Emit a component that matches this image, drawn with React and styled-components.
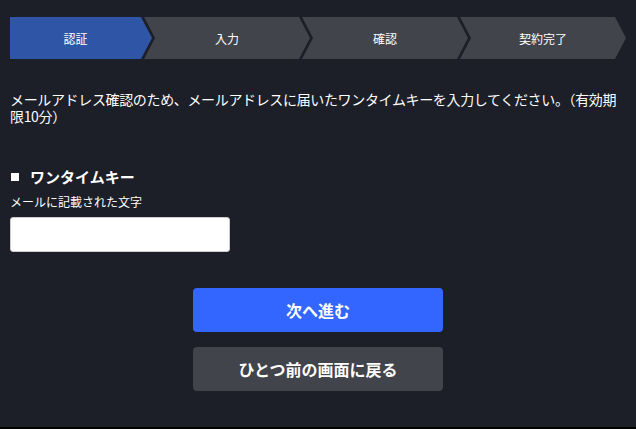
import React from "react";
import styled, { createGlobalStyle } from "styled-components";

const Global = createGlobalStyle`
  html, body {
    margin: 0;
    padding: 0;
    background: #000;
  }
  body {
    font-family: "Noto Sans CJK JP", "Noto Sans", sans-serif;
    color: #fff;
  }
`;

const Page = styled.div`
  height: 427px;
  background: #1c1e28;
  padding: 17px 10px 0;
  box-sizing: border-box;
`;

const Steps = styled.div`
  display: flex;
  height: 42px;
`;

// chevron steps, the first one has no notch on its left
const Step = styled.div`
  box-sizing: border-box;
  flex: ${(p) => (p.first ? "0 0 142px" : "1 1 0")};
  display: flex;
  align-items: center;
  justify-content: center;
  font-size: 12px;
  background: ${(p) => (p.active ? "#2f55a6" : "#41444b")};
  margin-left: ${(p) => (p.first ? "0" : "-8px")};
  padding: ${(p) => (p.first ? "0 11px 0 0" : "0")};
  clip-path: ${(p) =>
    p.first
      ? "polygon(0 0, calc(100% - 11px) 0, 100% 50%, calc(100% - 11px) 100%, 0 100%)"
      : "polygon(0 0, calc(100% - 11px) 0, 100% 50%, calc(100% - 11px) 100%, 0 100%, 11px 50%)"};
`;

const Lead = styled.p`
  margin: 32px 0 0;
  font-size: 14px;
  line-height: 17px;
  letter-spacing: -0.35px;
`;

const Heading = styled.h3`
  margin: 42px 0 0;
  display: flex;
  align-items: center;
  gap: 11px;
  font-size: 15px;
  font-weight: 700;
  line-height: 20px;
  padding-left: 1px;
`;

const Square = styled.span`
  width: 8px;
  height: 8px;
  background: #fff;
`;

const Note = styled.div`
  margin-top: 7px;
  font-size: 12px;
  line-height: 16px;
`;

const KeyInput = styled.input`
  display: block;
  margin-top: 7px;
  width: 220px;
  height: 35px;
  box-sizing: border-box;
  border: 1px solid #ccc;
  border-radius: 3px;
  background: #fff;
  padding: 0 8px;
  font-size: 14px;
`;

const Actions = styled.div`
  display: flex;
  flex-direction: column;
  align-items: center;
  gap: 15px;
  margin-top: 36px;
`;

const Button = styled.button`
  width: 250px;
  height: 44px;
  border: none;
  border-radius: 4px;
  background: ${(p) => (p.primary ? "#3366ff" : "#41444b")};
  color: #fff;
  font-family: inherit;
  font-size: 16px;
  font-weight: 700;
  cursor: pointer;
`;

const steps = ["認証", "入力", "確認", "契約完了"];

export default function App() {
  return (
    <>
      <Global />
      <Page>
        <Steps>
          {steps.map((s, i) => (
            <Step key={s} first={i === 0} active={i === 0}>
              {s}
            </Step>
          ))}
        </Steps>
        <Lead>
          メールアドレス確認のため、メールアドレスに届いたワンタイムキーを入力してください。（有効期限10分）
        </Lead>
        <Heading>
          <Square />
          ワンタイムキー
        </Heading>
        <Note>メールに記載された文字</Note>
        <KeyInput type="text" />
        <Actions>
          <Button primary>次へ進む</Button>
          <Button>ひとつ前の画面に戻る</Button>
        </Actions>
      </Page>
    </>
  );
}
